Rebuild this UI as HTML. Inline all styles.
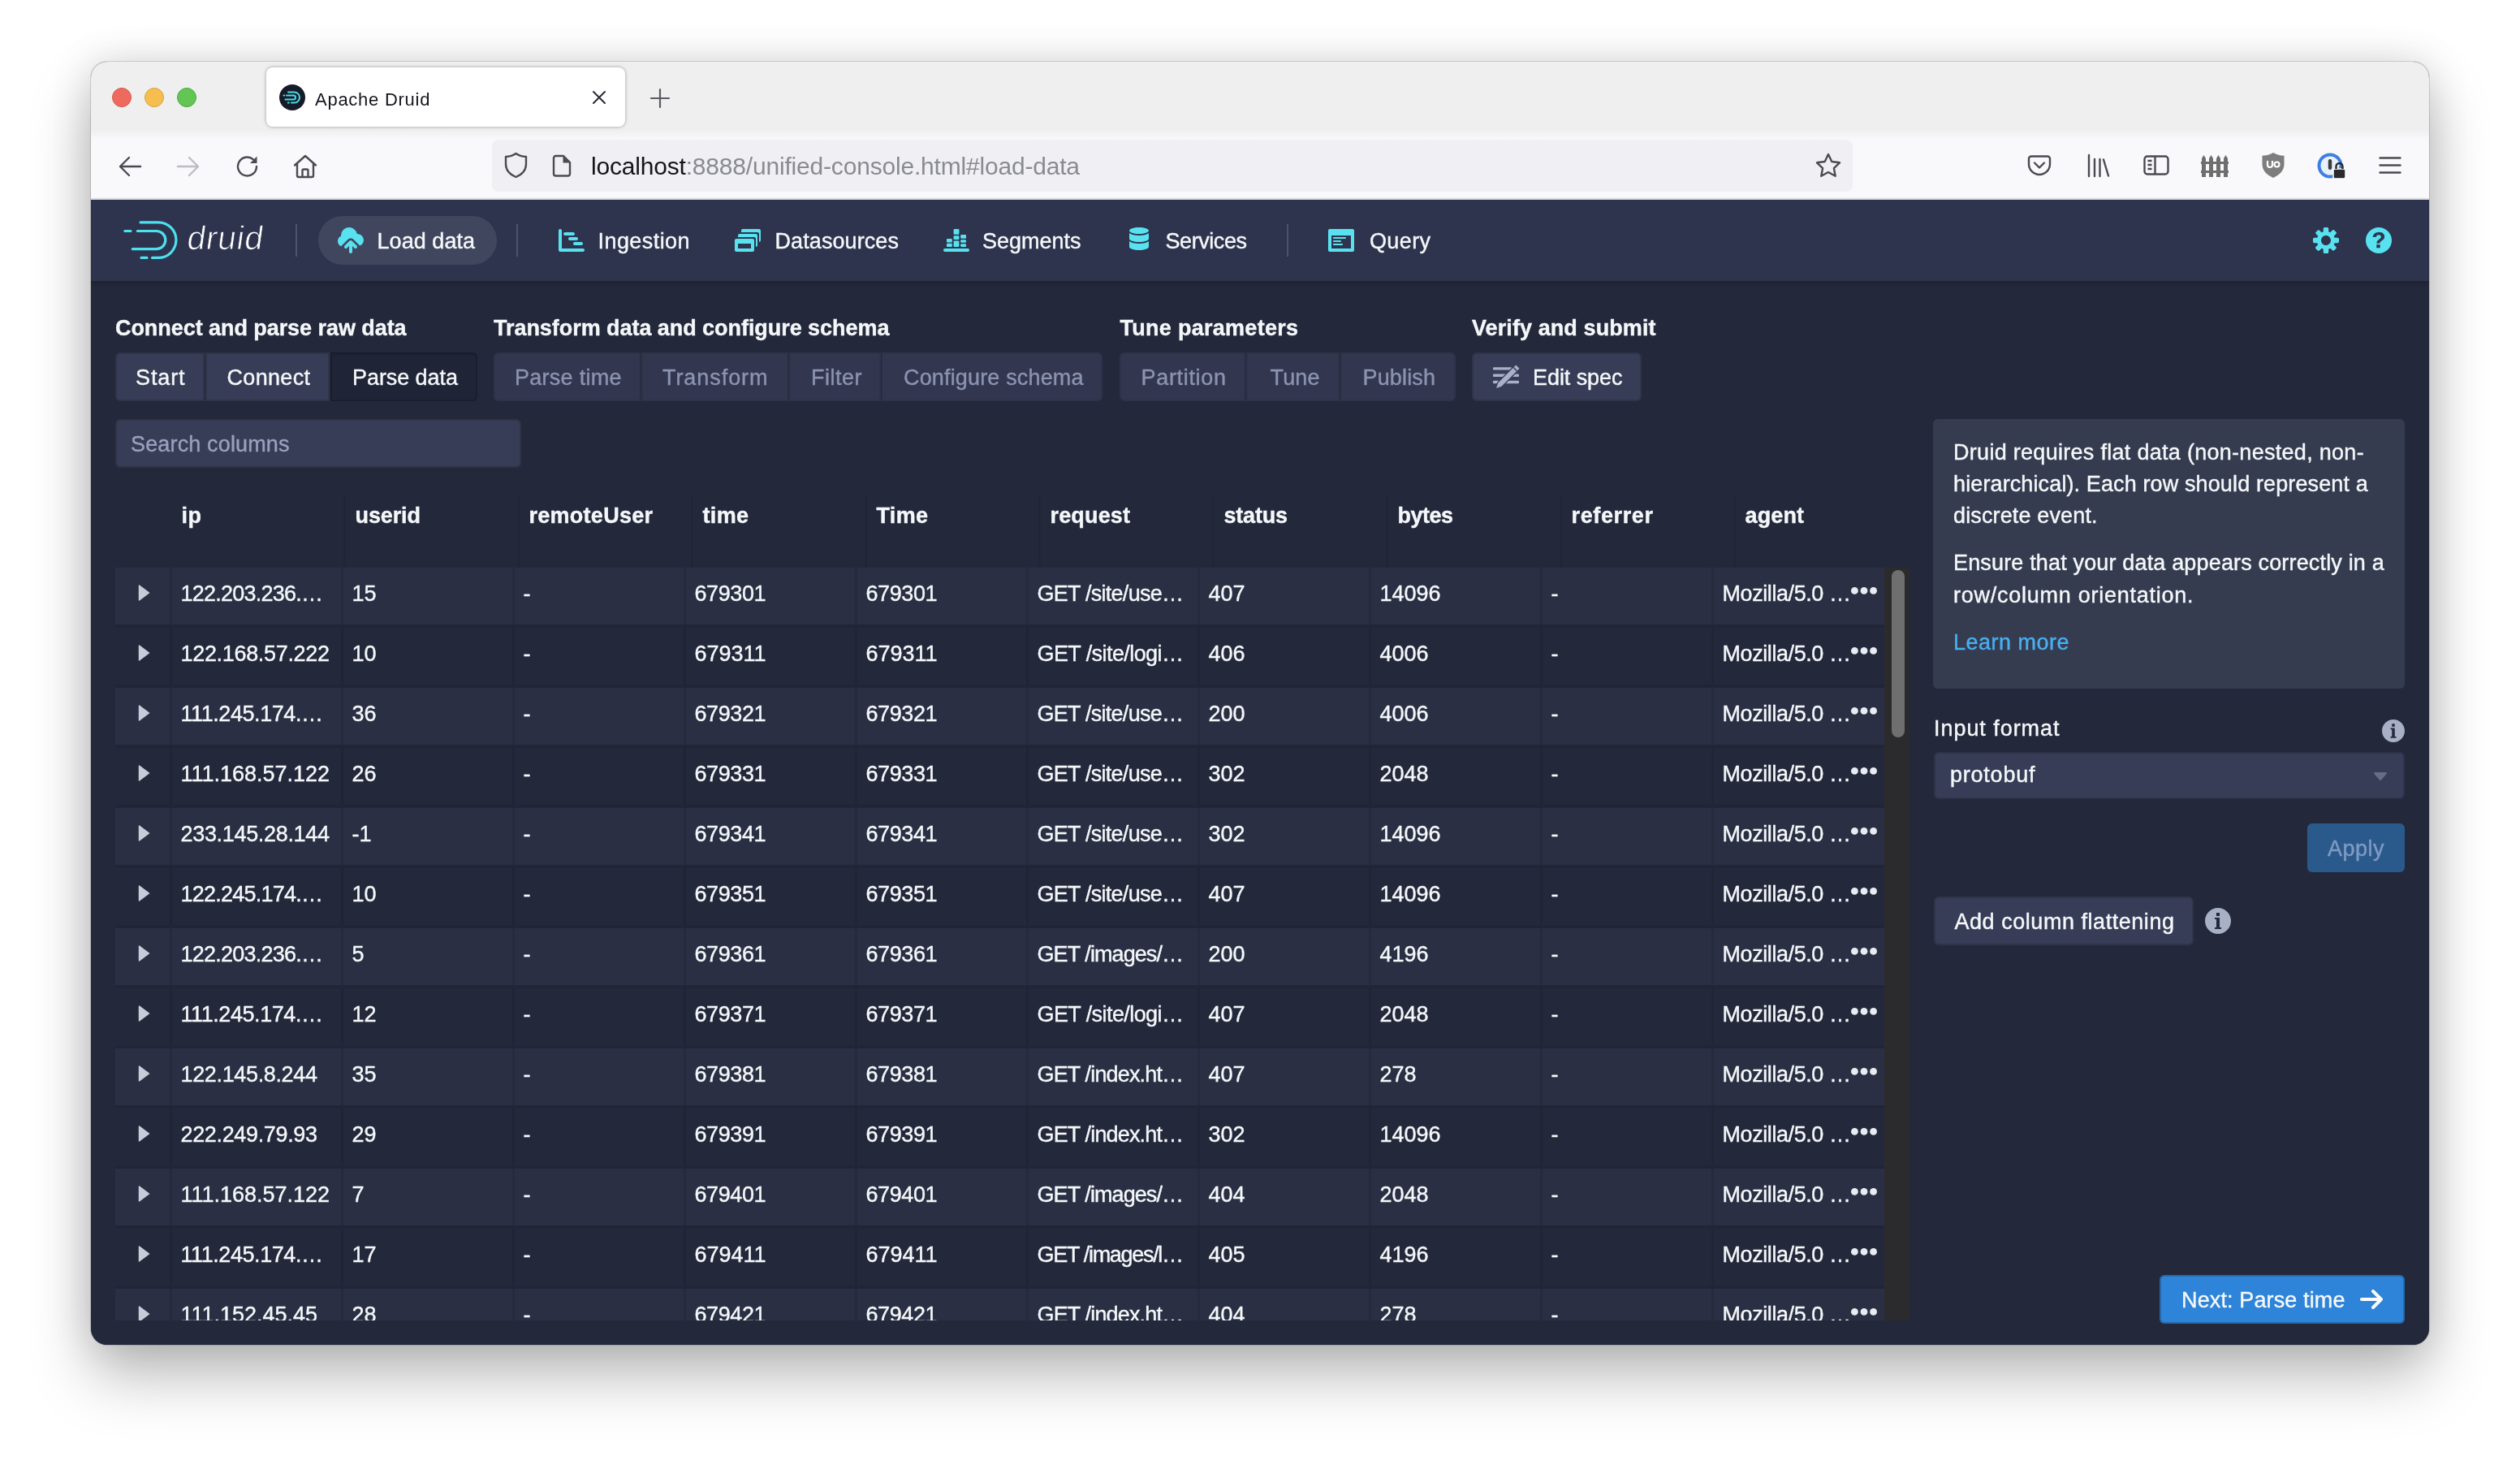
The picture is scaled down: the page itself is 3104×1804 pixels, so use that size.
<!DOCTYPE html>
<html lang="en"><head><meta charset="utf-8"><title>Apache Druid</title>
<style>
html,body{margin:0;padding:0}
body{width:3104px;height:1804px;background:#fff;overflow:hidden;position:relative;font-family:"Liberation Sans",sans-serif}
.win{position:absolute;left:112px;top:76px;width:2880px;height:1580px;border-radius:20px;overflow:hidden;background:#24283b}
.shadow{position:absolute;left:112px;top:76px;width:2880px;height:1580px;border-radius:20px;box-shadow:0 0 0 1px rgba(0,0,0,.13),0 38px 76px rgba(0,0,0,.27),0 0 50px rgba(0,0,0,.13)}
.o{position:absolute;left:-112px;top:-76px;width:3104px;height:1804px;will-change:transform}
.t{position:absolute;white-space:pre;line-height:1;text-decoration:none;margin:0;font-style:normal}
.druid-app .t{-webkit-text-stroke:.4px currentColor}
.tl{position:absolute;width:24px;height:24px;border-radius:50%;box-sizing:border-box}
.row{position:absolute;left:0;width:2180px;height:70px;border-bottom:4px solid #212537}
.row .sep{position:absolute;top:0;width:3px;height:70px;background:rgba(0,0,0,.085)}
svg{display:block;overflow:visible}
</style></head>
<body>
<div class="shadow"></div>
<div class="win"><div class="o">
<section class="browser-chrome">
<div class="tabbar" style="position:absolute;left:112px;top:76px;width:2880px;height:96px;background:linear-gradient(#efeff0 0,#efeff0 84px,#f9f9fb 96px);"></div>
<div class="navbar" style="position:absolute;left:112px;top:172px;width:2880px;height:74px;background:#f9f9fb;border-bottom:2px solid #dfe3ea;box-sizing:border-box"></div>
<div class="tl" style="left:138px;top:108px;background:#ee6a5e;border:1px solid #d5574c"></div>
<div class="tl" style="left:178px;top:108px;background:#f5be4f;border:1px solid #d8a03b"></div>
<div class="tl" style="left:218px;top:108px;background:#62c554;border:1px solid #4fa73f"></div>
<div class="tab" style="position:absolute;left:328px;top:83px;width:442px;height:73px;background:#fff;border-radius:8px;box-shadow:0 0 4px rgba(0,0,0,.35)"></div>
<svg style="position:absolute;left:344px;top:104px" width="32" height="32" viewBox="0 0 32 32" ><circle cx="16" cy="16" r="16" fill="#161b27"/><g fill="none" stroke="#46dcec" stroke-width="2" stroke-linecap="round"><path d="M11 9.500h7.500a6.500 6.500 0 010 13H15"/><path d="M9 13.500h8.500a2.500 2.500 0 010 5H7.500"/></g><g stroke="#46dcec" stroke-width="2" stroke-linecap="round"><path d="M5.500 13.500h.8M10.800 22.500h1"/></g></svg>
<span class="t" style="left:388.0px;top:112.1px;font-size:22px;color:#15141a;letter-spacing:0.74px;">Apache Druid</span>
<svg style="position:absolute;left:730px;top:112px" width="16" height="16" viewBox="0 0 16 16" ><path d="M1 1l14 14M15 1L1 15" stroke="#2b2a33" stroke-width="2" stroke-linecap="round"/></svg>
<svg style="position:absolute;left:801px;top:109px" width="24" height="24" viewBox="0 0 24 24" ><path d="M12 1v22M1 12h22" stroke="#5b5b66" stroke-width="2.200" stroke-linecap="round"/></svg>
<svg style="position:absolute;left:145px;top:191px" width="30" height="28" viewBox="0 0 30 28" ><path d="M28 14H3M14 3L3 14l11 11" fill="none" stroke="#4a4a52" stroke-width="2.400" stroke-linecap="round" stroke-linejoin="round"/></svg>
<svg style="position:absolute;left:217px;top:191px" width="30" height="28" viewBox="0 0 30 28" ><path d="M2 14h25M16 3l11 11-11 11" fill="none" stroke="#bdbdc2" stroke-width="2.400" stroke-linecap="round" stroke-linejoin="round"/></svg>
<svg style="position:absolute;left:289px;top:189px" width="32" height="32" viewBox="0 0 32 32" ><path d="M27 16a11.500 11.500 0 11-4-8.700" fill="none" stroke="#4a4a52" stroke-width="2.400" stroke-linecap="round"/><path d="M27.500 3.500v8.500H19z" fill="#4a4a52"/></svg>
<svg style="position:absolute;left:360px;top:189px" width="32" height="32" viewBox="0 0 32 32" ><path d="M3 14.500L16 3l13 11.500M6 12.500V27a2 2 0 002 2h16a2 2 0 002-2V12.500M12.500 29v-8a1.500 1.500 0 011.500-1.500h4a1.500 1.500 0 011.500 1.500v8" fill="none" stroke="#4a4a52" stroke-width="2.400" stroke-linecap="round" stroke-linejoin="round"/></svg>
<div class="urlbar" style="position:absolute;left:606px;top:172px;width:1676px;height:64px;background:#f0f0f4;border-radius:8px"></div>
<svg style="position:absolute;left:620px;top:187px" width="31" height="33" viewBox="0 0 31 33" ><path d="M15.500 2c4 2.800 8 3.800 12.500 4v9c0 8-5.500 13-12.500 16C8.500 28 3 23 3 15V6c4.500-.2 8.500-1.200 12.500-4z" fill="none" stroke="#4a4a52" stroke-width="2.400" stroke-linejoin="round"/></svg>
<svg style="position:absolute;left:679px;top:190px" width="26" height="28" viewBox="0 0 26 28" ><path d="M5 2h10l8 8v14a2.500 2.500 0 01-2.500 2.500h-15A2.500 2.500 0 013 24V4.500A2.500 2.500 0 015.500 2z" fill="none" stroke="#4a4a52" stroke-width="2.400" stroke-linejoin="round"/><path d="M14.500 2.500l8 8h-8z" fill="#4a4a52"/></svg>
<span class="t" style="left:728px;top:190.4px;font-size:30px;letter-spacing:-0.19px;color:#8a8a93"><span style="color:#15141a">localhost</span>:8888/unified-console.html#load-data</span>
<svg style="position:absolute;left:2235px;top:187px" width="34" height="34" viewBox="0 0 34 34" ><path d="M17 3l4.300 9 9.700 1.300-7.100 6.800 1.800 9.700L17 25l-8.700 4.800 1.800-9.700L3 13.300 12.700 12z" fill="none" stroke="#4a4a52" stroke-width="2.400" stroke-linejoin="round"/></svg>
<svg style="position:absolute;left:2497px;top:190px" width="30" height="28" viewBox="0 0 30 28" ><path d="M5 2.500h20a3 3 0 013 3V12a13 13 0 01-26 0V5.500a3 3 0 013-3z" fill="none" stroke="#4a4a52" stroke-width="2.400"/><path d="M9 10.500l6 6 6-6" fill="none" stroke="#4a4a52" stroke-width="2.400" stroke-linecap="round" stroke-linejoin="round"/></svg>
<svg style="position:absolute;left:2570px;top:189px" width="30" height="30" viewBox="0 0 30 30" ><path d="M3 2v26M10 7v21M16.500 7v21M21 7.500l6 20" fill="none" stroke="#4a4a52" stroke-width="2.400" stroke-linecap="round"/></svg>
<svg style="position:absolute;left:2640px;top:190px" width="32" height="28" viewBox="0 0 32 28" ><rect x="1.500" y="2.500" width="29" height="22" rx="3.500" fill="none" stroke="#4a4a52" stroke-width="2.400"/><path d="M14.500 2.500v22M5.500 8h5M5.500 13h5M5.500 18h5" stroke="#4a4a52" stroke-width="2.400"/></svg>
<svg style="position:absolute;left:2711px;top:189px" width="34" height="30" viewBox="0 0 34 30" ><g fill="#6e6e6e"><path d="M1 6l2.500-4L6 6v23H1zM10 6l2.500-4L15 6v23h-5zM19 6l2.500-4L24 6v23h-5zM28 6l2.500-4L33 6v23h-5z"/><rect x="0" y="10" width="34" height="3"/><rect x="0" y="21" width="34" height="3"/></g></svg>
<svg style="position:absolute;left:2785px;top:187px" width="30" height="33" viewBox="0 0 30 33" ><path d="M15 1c4 2.500 8.500 3.500 13.500 3.800V15c0 8.500-6 13.500-13.500 17C7.500 28.500 1.500 23.500 1.500 15V4.800C6.500 4.500 11 3.500 15 1z" fill="#7d7d7d"/><path d="M8 11v5a3 3 0 006 0v-5" fill="none" stroke="#fff" stroke-width="2.200"/><circle cx="19.500" cy="15.500" r="3" fill="none" stroke="#fff" stroke-width="2.200"/></svg>
<svg style="position:absolute;left:2854px;top:187px" width="36" height="36" viewBox="0 0 36 36" ><circle cx="16" cy="17" r="13.500" fill="#e9f0fb" stroke="#3f7fe0" stroke-width="4"/><rect x="13.800" y="9" width="4.400" height="13" rx="2.200" fill="#3b3b3b"/><rect x="20" y="21" width="15" height="12" rx="2" fill="#2a2a2a" stroke="#fff" stroke-width="1.500"/><path d="M23.500 21v-3a4 4 0 018 0v3" fill="none" stroke="#2a2a2a" stroke-width="2.400"/></svg>
<svg style="position:absolute;left:2930px;top:192px" width="28" height="24" viewBox="0 0 28 24" ><path d="M1.500 2.500h25M1.500 11.500h25M1.500 20.500h25" stroke="#4a4a52" stroke-width="2.400" stroke-linecap="round"/></svg>
</section>
<main class="druid-app">
<div class="app-bg" style="position:absolute;left:112px;top:246px;width:2880px;height:1410px;background:#24283b;"></div>
<header>
<div class="header-bar" style="position:absolute;left:112px;top:246px;width:2880px;height:100px;background:#2f344e;box-shadow:0 2px 6px rgba(0,0,0,.25)"></div>
<svg style="position:absolute;left:150px;top:270px" width="72" height="52" viewBox="0 0 72 52" ><g fill="none" stroke="#4de0ee" stroke-width="3.200" stroke-linecap="round"><path d="M23 3.800H45.100a21.800 21.800 0 010 43.600H37.500"/><path d="M19.300 14.500H42.700a11.100 11.100 0 010 22.200H13.300"/><path d="M3.800 14.500h7.200M24 47.400h7"/></g></svg>
<span class="t" style="left:228.0px;top:272.5px;font-size:41px;color:#fff;letter-spacing:0.58px;-webkit-text-stroke:.900px #2f344e;transform:skewX(-8deg);transform-origin:0 100%;">druid</span>
<div style="position:absolute;left:364px;top:276px;width:2px;height:40px;background:rgba(255,255,255,.15);"></div>
<div style="position:absolute;left:636px;top:276px;width:2px;height:40px;background:rgba(255,255,255,.15);"></div>
<div style="position:absolute;left:1585px;top:276px;width:2px;height:40px;background:rgba(255,255,255,.15);"></div>
<div class="pill" style="position:absolute;left:392px;top:266px;width:220px;height:60px;background:#43486400;border-radius:30px;background:#41465f"></div>
<svg style="position:absolute;left:416px;top:280px" width="32" height="32" viewBox="0 0 16 16" ><path fill="#58e2ef" d="M12 4c-.03 0-.07 0-.1.01A5 5 0 002 5c0 .11.01.22.02.33A3.51 3.51 0 000 8.5c0 1.41.84 2.61 2.03 3.17L6.3 7.4c.45-.45 1.05-.7 1.7-.7s1.25.25 1.7.7l3.9 3.9A3.99 3.99 0 0016 8c0-2.21-1.79-4-4-4z"/><path fill="#58e2ef" d="M8.71 8.29C8.53 8.11 8.28 8 8 8s-.53.11-.71.29l-3 3a1.003 1.003 0 001.42 1.42L7 11.41V15c0 .55.45 1 1 1s1-.45 1-1v-3.590l1.290 1.290c.18.19.43.3.71.3a1.003 1.003 0 00.71-1.710l-3-3z"/></svg>
<a class="t" style="left:464.5px;top:284.3px;font-size:27px;color:#f5f8fa;letter-spacing:0.05px;">Load data</a>
<svg style="position:absolute;left:688px;top:280px" width="32" height="32" viewBox="0 0 16 16" ><path d="M4 5h5c.55 0 1-.45 1-1s-.45-1-1-1H4c-.55 0-1 .45-1 1s.45 1 1 1zm2 2c0 .55.45 1 1 1h4c.55 0 1-.45 1-1s-.45-1-1-1H7c-.55 0-1 .45-1 1zm9 6H2V2c0-.55-.45-1-1-1s-1 .45-1 1v12c0 .55.45 1 1 1h14c.55 0 1-.45 1-1s-.45-1-1-1zm-5-4c-.55 0-1 .45-1 1s.45 1 1 1h4c.55 0 1-.45 1-1s-.45-1-1-1h-4z" fill="#58e2ef" fill-rule="evenodd"/></svg>
<a class="t" style="left:736.5px;top:284.3px;font-size:27px;color:#f5f8fa;letter-spacing:0.43px;">Ingestion</a>
<svg style="position:absolute;left:905px;top:280px" width="32" height="32" viewBox="0 0 16 16" ><path fill="#58e2ef" fill-rule="evenodd" d="M1 7h10c.55 0 1 .45 1 1v6c0 .55-.45 1-1 1H1c-.55 0-1-.45-1-1V8c0-.55.45-1 1-1zm1 3v3h8v-3H2z"/><path fill="#58e2ef" d="M3 4h10c.55 0 1 .45 1 1v6c0 .55-.45 1-1 1V7c0-.55-.45-1-1-1H2V5c0-.55.45-1 1-1z"/><path fill="#58e2ef" d="M5 1h10c.55 0 1 .45 1 1v6c0 .55-.45 1-1 1V4c0-.55-.45-1-1-1H4V2c0-.55.45-1 1-1z"/></svg>
<a class="t" style="left:954.5px;top:284.3px;font-size:27px;color:#f5f8fa;letter-spacing:0.09px;">Datasources</a>
<svg style="position:absolute;left:1162px;top:280px" width="32" height="32" viewBox="0 0 16 16" ><rect x="0" y="13" width="16" height="2" rx="1" fill="#58e2ef"/><rect x="2" y="7" width="3.4" height="2.2" rx=".5" fill="#58e2ef"/><rect x="2" y="9.9" width="3.4" height="2.1" rx=".5" fill="#58e2ef"/><rect x="6.3" y="1" width="3.4" height="3.4" rx=".5" fill="#58e2ef"/><rect x="6.3" y="5.1" width="3.4" height="2.4" rx=".5" fill="#58e2ef"/><rect x="6.3" y="8.2" width="3.4" height="3.8" rx=".5" fill="#58e2ef"/><rect x="10.6" y="4.5" width="3.4" height="2.4" rx=".5" fill="#58e2ef"/><rect x="10.6" y="7.6" width="3.4" height="1.8" rx=".5" fill="#58e2ef"/><rect x="10.6" y="10.1" width="3.4" height="1.9" rx=".5" fill="#58e2ef"/></svg>
<a class="t" style="left:1210.0px;top:284.3px;font-size:27px;color:#f5f8fa;letter-spacing:-0.01px;">Segments</a>
<svg style="position:absolute;left:1387px;top:280px" width="32" height="32" viewBox="0 0 16 16" ><path d="M8 4c3.31 0 6-.9 6-2s-2.69-2-6-2C4.68 0 2 .9 2 2s2.68 2 6 2zm-6-.52V7c0 1.1 2.69 2 6 2s6-.9 6-2V3.48C12.83 4.39 10.59 5 8 5c-2.59 0-4.83-.61-6-1.52zm0 5V12c0 1.1 2.69 2 6 2s6-.9 6-2V8.480C12.83 9.39 10.59 10 8 10c-2.59 0-4.83-.61-6-1.52z" fill="#58e2ef" fill-rule="evenodd"/></svg>
<a class="t" style="left:1435.5px;top:284.3px;font-size:27px;color:#f5f8fa;letter-spacing:-0.43px;">Services</a>
<svg style="position:absolute;left:1636px;top:280px" width="32" height="32" viewBox="0 0 16 16" ><path d="M3.5 7h7c.28 0 .5-.22.5-.5s-.22-.5-.5-.5h-7c-.28 0-.5.22-.5.5s.22.5.5.5zM15 1H1c-.55 0-1 .45-1 1v12c0 .55.45 1 1 1h14c.55 0 1-.45 1-1V2c0-.55-.45-1-1-1zm-1 12H2V5h12v8zM3.500 9h4c.28 0 .5-.22.5-.5S7.78 8 7.5 8h-4c-.28 0-.5.22-.5.5s.22.5.5.5zm0 2h5c.28 0 .5-.22.5-.5s-.22-.5-.5-.5h-5c-.28 0-.5.22-.5.5s.22.5.5.5z" fill="#58e2ef" fill-rule="evenodd"/></svg>
<a class="t" style="left:1687.0px;top:284.3px;font-size:27px;color:#f5f8fa;letter-spacing:0.37px;">Query</a>
<svg style="position:absolute;left:2849px;top:280px" width="32" height="32" viewBox="0 0 16 16" ><path d="M15.19 6.39h-1.85c-.11-.37-.27-.71-.45-1.04l1.36-1.36c.31-.31.31-.82 0-1.13l-1.13-1.130a.803.803 0 00-1.130 0l-1.360 1.360c-.33-.17-.67-.33-1.040-.44V.790c0-.44-.36-.8-.8-.8h-1.600c-.44 0-.8.36-.8.8v1.860c-.39.12-.75.28-1.100.47l-1.300-1.300c-.3-.3-.79-.3-1.090 0L1.820 2.910c-.3.3-.3.79 0 1.090l1.300 1.300c-.2.34-.36.7-.48 1.090H.790c-.44 0-.8.36-.8.8v1.600c0 .44.36.8.8.8h1.850c.11.37.27.71.45 1.040l-1.360 1.360c-.31.31-.31.82 0 1.130l1.130 1.130c.31.31.82.31 1.130 0l1.360-1.360c.33.18.67.33 1.040.44v1.860c0 .44.36.8.8.8h1.600c.44 0 .8-.36.8-.8v-1.860c.39-.12.75-.28 1.100-.47l1.300 1.300c.3.3.79.3 1.090 0l1.090-1.090c.3-.3.3-.79 0-1.090l-1.300-1.300c.19-.35.36-.71.47-1.100h1.860c.44 0 .8-.36.8-.8v-1.600a.816.816 0 00-.810-.790zM8 11c-1.660 0-3-1.340-3-3s1.340-3 3-3 3 1.340 3 3-1.340 3-3 3z" fill="#58e2ef" fill-rule="evenodd"/></svg>
<svg style="position:absolute;left:2914px;top:280px" width="32" height="32" viewBox="0 0 32 32" ><circle cx="16" cy="16" r="16" fill="#58e2ef"/></svg>
<span class="t" style="left:2921.5px;top:281.8px;font-size:28px;font-weight:700;color:#2f344e;">?</span>
</header>
<nav class="steps">
<div class="t" style="left:142.0px;top:391.3px;font-size:27px;font-weight:700;color:#f5f8fa;letter-spacing:-0.06px;">Connect and parse raw data</div>
<div class="btn" style="position:absolute;left:142px;top:434px;width:110px;height:60px;background:#383d57;border-radius:6px 0px 0px 6px;box-shadow:inset 0 0 0 2px rgba(16,22,26,.22);"></div><span class="t" style="left:167.0px;top:452.3px;font-size:27px;color:#f5f8fa;letter-spacing:0.87px;">Start</span>
<div class="btn" style="position:absolute;left:253px;top:434px;width:153px;height:60px;background:#383d57;border-radius:0px 0px 0px 0px;box-shadow:inset 0 0 0 2px rgba(16,22,26,.22);"></div><span class="t" style="left:279.5px;top:452.3px;font-size:27px;color:#f5f8fa;letter-spacing:0.32px;">Connect</span>
<div class="btn" style="position:absolute;left:407px;top:434px;width:181px;height:60px;background:#202437;border-radius:0px 6px 6px 0px;box-shadow:inset 0 0 0 2px rgba(16,22,26,.3), inset 0 2px 3px rgba(16,22,26,.2);"></div><span class="t" style="left:434.0px;top:452.3px;font-size:27px;color:#f5f8fa;letter-spacing:-0.07px;">Parse data</span>
<div class="t" style="left:608.0px;top:391.3px;font-size:27px;font-weight:700;color:#f5f8fa;letter-spacing:-0.05px;">Transform data and configure schema</div>
<div class="btn" style="position:absolute;left:608px;top:434px;width:181px;height:60px;background:#32374f;border-radius:6px 0px 0px 6px;box-shadow:inset 0 0 0 2px rgba(16,22,26,.10);"></div><span class="t" style="left:634.0px;top:452.3px;font-size:27px;color:#8b93b0;letter-spacing:0.27px;">Parse time</span>
<div class="btn" style="position:absolute;left:790px;top:434px;width:181px;height:60px;background:#32374f;border-radius:0px 0px 0px 0px;box-shadow:inset 0 0 0 2px rgba(16,22,26,.10);"></div><span class="t" style="left:816.0px;top:452.3px;font-size:27px;color:#8b93b0;letter-spacing:0.94px;">Transform</span>
<div class="btn" style="position:absolute;left:972px;top:434px;width:113px;height:60px;background:#32374f;border-radius:0px 0px 0px 0px;box-shadow:inset 0 0 0 2px rgba(16,22,26,.10);"></div><span class="t" style="left:999.0px;top:452.3px;font-size:27px;color:#8b93b0;letter-spacing:0.50px;">Filter</span>
<div class="btn" style="position:absolute;left:1086px;top:434px;width:272px;height:60px;background:#32374f;border-radius:0px 6px 6px 0px;box-shadow:inset 0 0 0 2px rgba(16,22,26,.10);"></div><span class="t" style="left:1113.0px;top:452.3px;font-size:27px;color:#8b93b0;letter-spacing:0.16px;">Configure schema</span>
<div class="t" style="left:1379.5px;top:391.3px;font-size:27px;font-weight:700;color:#f5f8fa;letter-spacing:0.28px;">Tune parameters</div>
<div class="btn" style="position:absolute;left:1379px;top:434px;width:155px;height:60px;background:#32374f;border-radius:6px 0px 0px 6px;box-shadow:inset 0 0 0 2px rgba(16,22,26,.10);"></div><span class="t" style="left:1405.5px;top:452.3px;font-size:27px;color:#8b93b0;letter-spacing:0.68px;">Partition</span>
<div class="btn" style="position:absolute;left:1535px;top:434px;width:115px;height:60px;background:#32374f;border-radius:0px 0px 0px 0px;box-shadow:inset 0 0 0 2px rgba(16,22,26,.10);"></div><span class="t" style="left:1564.5px;top:452.3px;font-size:27px;color:#8b93b0;letter-spacing:0.15px;">Tune</span>
<div class="btn" style="position:absolute;left:1651px;top:434px;width:142px;height:60px;background:#32374f;border-radius:0px 6px 6px 0px;box-shadow:inset 0 0 0 2px rgba(16,22,26,.10);"></div><span class="t" style="left:1678.5px;top:452.3px;font-size:27px;color:#8b93b0;letter-spacing:0.16px;">Publish</span>
<div class="t" style="left:1813.0px;top:391.3px;font-size:27px;font-weight:700;color:#f5f8fa;letter-spacing:0.09px;">Verify and submit</div>
<div class="btn" style="position:absolute;left:1813px;top:434px;width:209px;height:60px;background:#383d57;border-radius:6px 6px 6px 6px;box-shadow:inset 0 0 0 2px rgba(16,22,26,.22);"></div><svg style="position:absolute;left:1839px;top:448px" width="32" height="32" viewBox="0 0 16 16" ><g fill="#a9b0c8"><rect x="0" y="2.1" width="11.5" height="1.7" rx=".5"/><rect x="0" y="6.3" width="16" height="1.7" rx=".5"/><rect x="0" y="10.4" width="16" height="1.7" rx=".5"/><path d="M16.260 2.860L14.140.740 3.140 11.740 2 15 5.260 13.860z" stroke="#383d57" stroke-width="1.300" stroke-linejoin="round" paint-order="stroke"/><path d="M12.600 2.300l2.100 2.100" stroke="#383d57" stroke-width=".7" fill="none"/></g></svg><span class="t" style="left:1888.0px;top:452.3px;font-size:27px;color:#f5f8fa;letter-spacing:-0.07px;">Edit spec</span>
<div class="input" style="position:absolute;left:142px;top:516px;width:500px;height:60px;background:#383d57;border-radius:6px;box-shadow:inset 0 0 0 2px rgba(16,22,26,.25)"></div>
<span class="t" style="left:161.0px;top:534.3px;font-size:27px;color:#98a0bd;letter-spacing:0.15px;">Search columns</span>
</nav>
<section class="table">
<div class="t" style="left:223.5px;top:621.8px;font-size:27px;font-weight:700;color:#f5f8fa;letter-spacing:0.50px;">ip</div>
<div style="position:absolute;left:423px;top:610px;width:3px;height:89px;background:rgba(0,0,0,.07);"></div>
<div class="t" style="left:437.5px;top:621.8px;font-size:27px;font-weight:700;color:#f5f8fa;letter-spacing:-0.11px;">userid</div>
<div style="position:absolute;left:637px;top:610px;width:3px;height:89px;background:rgba(0,0,0,.07);"></div>
<div class="t" style="left:651.5px;top:621.8px;font-size:27px;font-weight:700;color:#f5f8fa;letter-spacing:0.27px;">remoteUser</div>
<div style="position:absolute;left:851px;top:610px;width:3px;height:89px;background:rgba(0,0,0,.07);"></div>
<div class="t" style="left:865.5px;top:621.8px;font-size:27px;font-weight:700;color:#f5f8fa;letter-spacing:0.32px;">time</div>
<div style="position:absolute;left:1065px;top:610px;width:3px;height:89px;background:rgba(0,0,0,.07);"></div>
<div class="t" style="left:1079.5px;top:621.8px;font-size:27px;font-weight:700;color:#f5f8fa;letter-spacing:0.32px;">Time</div>
<div style="position:absolute;left:1279px;top:610px;width:3px;height:89px;background:rgba(0,0,0,.07);"></div>
<div class="t" style="left:1293.5px;top:621.8px;font-size:27px;font-weight:700;color:#f5f8fa;letter-spacing:0.16px;">request</div>
<div style="position:absolute;left:1493px;top:610px;width:3px;height:89px;background:rgba(0,0,0,.07);"></div>
<div class="t" style="left:1507.5px;top:621.8px;font-size:27px;font-weight:700;color:#f5f8fa;letter-spacing:-0.21px;">status</div>
<div style="position:absolute;left:1707px;top:610px;width:3px;height:89px;background:rgba(0,0,0,.07);"></div>
<div class="t" style="left:1721.5px;top:621.8px;font-size:27px;font-weight:700;color:#f5f8fa;letter-spacing:-0.51px;">bytes</div>
<div style="position:absolute;left:1921px;top:610px;width:3px;height:89px;background:rgba(0,0,0,.07);"></div>
<div class="t" style="left:1935.5px;top:621.8px;font-size:27px;font-weight:700;color:#f5f8fa;letter-spacing:0.63px;">referrer</div>
<div style="position:absolute;left:2135px;top:610px;width:3px;height:89px;background:rgba(0,0,0,.07);"></div>
<div class="t" style="left:2149.5px;top:621.8px;font-size:27px;font-weight:700;color:#f5f8fa;letter-spacing:0.12px;">agent</div>
<div class="tbody" style="position:absolute;left:142px;top:699px;width:2180px;height:927px;overflow:hidden"><div class="row" style="top:0px;background:#2a2f43"><svg style="position:absolute;left:28px;top:20px" width="15" height="22" viewBox="0 0 15 22" ><path d="M1.500 2L13.500 11 1.500 20z" fill="#c6cdd9" stroke="#c6cdd9" stroke-width="1.500" stroke-linejoin="round"/></svg><i class="sep" style="left:67px"></i><span class="t" style="left:80.5px;top:19.3px;font-size:27px;color:#f5f8fa;letter-spacing:-0.76px;">122.203.236.…</span><i class="sep" style="left:278px"></i><span class="t" style="left:291.5px;top:19.3px;font-size:27px;color:#f5f8fa;">15</span><i class="sep" style="left:489px"></i><span class="t" style="left:502.5px;top:19.3px;font-size:27px;color:#f5f8fa;">-</span><i class="sep" style="left:700px"></i><span class="t" style="left:713.5px;top:19.3px;font-size:27px;color:#f5f8fa;letter-spacing:-0.42px;">679301</span><i class="sep" style="left:911px"></i><span class="t" style="left:924.5px;top:19.3px;font-size:27px;color:#f5f8fa;letter-spacing:-0.42px;">679301</span><i class="sep" style="left:1122px"></i><span class="t" style="left:1135.5px;top:19.3px;font-size:27px;color:#f5f8fa;letter-spacing:-0.74px;">GET /site/use…</span><i class="sep" style="left:1333px"></i><span class="t" style="left:1346.5px;top:19.3px;font-size:27px;color:#f5f8fa;">407</span><i class="sep" style="left:1544px"></i><span class="t" style="left:1557.5px;top:19.3px;font-size:27px;color:#f5f8fa;">14096</span><i class="sep" style="left:1755px"></i><span class="t" style="left:1768.5px;top:19.3px;font-size:27px;color:#f5f8fa;">-</span><i class="sep" style="left:1966px"></i><span class="t" style="left:1979.5px;top:19.3px;font-size:27px;color:#f5f8fa;letter-spacing:-0.42px;">Mozilla/5.0 …</span><svg style="position:absolute;left:2138px;top:23.5px" width="32" height="8.8" viewBox="0 0 16 4.4" ><circle cx="2.2" cy="2.2" r="2.2" fill="#e8edf3"/><circle cx="8" cy="2.2" r="2.2" fill="#e8edf3"/><circle cx="13.8" cy="2.2" r="2.2" fill="#e8edf3"/></svg></div><div class="row" style="top:74px;background:#24283b"><svg style="position:absolute;left:28px;top:20px" width="15" height="22" viewBox="0 0 15 22" ><path d="M1.500 2L13.500 11 1.500 20z" fill="#c6cdd9" stroke="#c6cdd9" stroke-width="1.500" stroke-linejoin="round"/></svg><i class="sep" style="left:67px"></i><span class="t" style="left:80.5px;top:19.3px;font-size:27px;color:#f5f8fa;letter-spacing:-0.32px;">122.168.57.222</span><i class="sep" style="left:278px"></i><span class="t" style="left:291.5px;top:19.3px;font-size:27px;color:#f5f8fa;">10</span><i class="sep" style="left:489px"></i><span class="t" style="left:502.5px;top:19.3px;font-size:27px;color:#f5f8fa;">-</span><i class="sep" style="left:700px"></i><span class="t" style="left:713.5px;top:19.3px;font-size:27px;color:#f5f8fa;letter-spacing:-0.02px;">679311</span><i class="sep" style="left:911px"></i><span class="t" style="left:924.5px;top:19.3px;font-size:27px;color:#f5f8fa;letter-spacing:-0.02px;">679311</span><i class="sep" style="left:1122px"></i><span class="t" style="left:1135.5px;top:19.3px;font-size:27px;color:#f5f8fa;letter-spacing:-0.58px;">GET /site/logi…</span><i class="sep" style="left:1333px"></i><span class="t" style="left:1346.5px;top:19.3px;font-size:27px;color:#f5f8fa;">406</span><i class="sep" style="left:1544px"></i><span class="t" style="left:1557.5px;top:19.3px;font-size:27px;color:#f5f8fa;">4006</span><i class="sep" style="left:1755px"></i><span class="t" style="left:1768.5px;top:19.3px;font-size:27px;color:#f5f8fa;">-</span><i class="sep" style="left:1966px"></i><span class="t" style="left:1979.5px;top:19.3px;font-size:27px;color:#f5f8fa;letter-spacing:-0.42px;">Mozilla/5.0 …</span><svg style="position:absolute;left:2138px;top:23.5px" width="32" height="8.8" viewBox="0 0 16 4.4" ><circle cx="2.2" cy="2.2" r="2.2" fill="#e8edf3"/><circle cx="8" cy="2.2" r="2.2" fill="#e8edf3"/><circle cx="13.8" cy="2.2" r="2.2" fill="#e8edf3"/></svg></div><div class="row" style="top:148px;background:#2a2f43"><svg style="position:absolute;left:28px;top:20px" width="15" height="22" viewBox="0 0 15 22" ><path d="M1.500 2L13.500 11 1.500 20z" fill="#c6cdd9" stroke="#c6cdd9" stroke-width="1.500" stroke-linejoin="round"/></svg><i class="sep" style="left:67px"></i><span class="t" style="left:80.5px;top:19.3px;font-size:27px;color:#f5f8fa;letter-spacing:-0.43px;">111.245.174.…</span><i class="sep" style="left:278px"></i><span class="t" style="left:291.5px;top:19.3px;font-size:27px;color:#f5f8fa;">36</span><i class="sep" style="left:489px"></i><span class="t" style="left:502.5px;top:19.3px;font-size:27px;color:#f5f8fa;">-</span><i class="sep" style="left:700px"></i><span class="t" style="left:713.5px;top:19.3px;font-size:27px;color:#f5f8fa;letter-spacing:-0.42px;">679321</span><i class="sep" style="left:911px"></i><span class="t" style="left:924.5px;top:19.3px;font-size:27px;color:#f5f8fa;letter-spacing:-0.42px;">679321</span><i class="sep" style="left:1122px"></i><span class="t" style="left:1135.5px;top:19.3px;font-size:27px;color:#f5f8fa;letter-spacing:-0.74px;">GET /site/use…</span><i class="sep" style="left:1333px"></i><span class="t" style="left:1346.5px;top:19.3px;font-size:27px;color:#f5f8fa;">200</span><i class="sep" style="left:1544px"></i><span class="t" style="left:1557.5px;top:19.3px;font-size:27px;color:#f5f8fa;">4006</span><i class="sep" style="left:1755px"></i><span class="t" style="left:1768.5px;top:19.3px;font-size:27px;color:#f5f8fa;">-</span><i class="sep" style="left:1966px"></i><span class="t" style="left:1979.5px;top:19.3px;font-size:27px;color:#f5f8fa;letter-spacing:-0.42px;">Mozilla/5.0 …</span><svg style="position:absolute;left:2138px;top:23.5px" width="32" height="8.8" viewBox="0 0 16 4.4" ><circle cx="2.2" cy="2.2" r="2.2" fill="#e8edf3"/><circle cx="8" cy="2.2" r="2.2" fill="#e8edf3"/><circle cx="13.8" cy="2.2" r="2.2" fill="#e8edf3"/></svg></div><div class="row" style="top:222px;background:#24283b"><svg style="position:absolute;left:28px;top:20px" width="15" height="22" viewBox="0 0 15 22" ><path d="M1.500 2L13.500 11 1.500 20z" fill="#c6cdd9" stroke="#c6cdd9" stroke-width="1.500" stroke-linejoin="round"/></svg><i class="sep" style="left:67px"></i><span class="t" style="left:80.5px;top:19.3px;font-size:27px;color:#f5f8fa;letter-spacing:-0.01px;">111.168.57.122</span><i class="sep" style="left:278px"></i><span class="t" style="left:291.5px;top:19.3px;font-size:27px;color:#f5f8fa;">26</span><i class="sep" style="left:489px"></i><span class="t" style="left:502.5px;top:19.3px;font-size:27px;color:#f5f8fa;">-</span><i class="sep" style="left:700px"></i><span class="t" style="left:713.5px;top:19.3px;font-size:27px;color:#f5f8fa;letter-spacing:-0.42px;">679331</span><i class="sep" style="left:911px"></i><span class="t" style="left:924.5px;top:19.3px;font-size:27px;color:#f5f8fa;letter-spacing:-0.42px;">679331</span><i class="sep" style="left:1122px"></i><span class="t" style="left:1135.5px;top:19.3px;font-size:27px;color:#f5f8fa;letter-spacing:-0.74px;">GET /site/use…</span><i class="sep" style="left:1333px"></i><span class="t" style="left:1346.5px;top:19.3px;font-size:27px;color:#f5f8fa;">302</span><i class="sep" style="left:1544px"></i><span class="t" style="left:1557.5px;top:19.3px;font-size:27px;color:#f5f8fa;">2048</span><i class="sep" style="left:1755px"></i><span class="t" style="left:1768.5px;top:19.3px;font-size:27px;color:#f5f8fa;">-</span><i class="sep" style="left:1966px"></i><span class="t" style="left:1979.5px;top:19.3px;font-size:27px;color:#f5f8fa;letter-spacing:-0.42px;">Mozilla/5.0 …</span><svg style="position:absolute;left:2138px;top:23.5px" width="32" height="8.8" viewBox="0 0 16 4.4" ><circle cx="2.2" cy="2.2" r="2.2" fill="#e8edf3"/><circle cx="8" cy="2.2" r="2.2" fill="#e8edf3"/><circle cx="13.8" cy="2.2" r="2.2" fill="#e8edf3"/></svg></div><div class="row" style="top:296px;background:#2a2f43"><svg style="position:absolute;left:28px;top:20px" width="15" height="22" viewBox="0 0 15 22" ><path d="M1.500 2L13.500 11 1.500 20z" fill="#c6cdd9" stroke="#c6cdd9" stroke-width="1.500" stroke-linejoin="round"/></svg><i class="sep" style="left:67px"></i><span class="t" style="left:80.5px;top:19.3px;font-size:27px;color:#f5f8fa;letter-spacing:-0.32px;">233.145.28.144</span><i class="sep" style="left:278px"></i><span class="t" style="left:291.5px;top:19.3px;font-size:27px;color:#f5f8fa;">-1</span><i class="sep" style="left:489px"></i><span class="t" style="left:502.5px;top:19.3px;font-size:27px;color:#f5f8fa;">-</span><i class="sep" style="left:700px"></i><span class="t" style="left:713.5px;top:19.3px;font-size:27px;color:#f5f8fa;letter-spacing:-0.42px;">679341</span><i class="sep" style="left:911px"></i><span class="t" style="left:924.5px;top:19.3px;font-size:27px;color:#f5f8fa;letter-spacing:-0.42px;">679341</span><i class="sep" style="left:1122px"></i><span class="t" style="left:1135.5px;top:19.3px;font-size:27px;color:#f5f8fa;letter-spacing:-0.74px;">GET /site/use…</span><i class="sep" style="left:1333px"></i><span class="t" style="left:1346.5px;top:19.3px;font-size:27px;color:#f5f8fa;">302</span><i class="sep" style="left:1544px"></i><span class="t" style="left:1557.5px;top:19.3px;font-size:27px;color:#f5f8fa;">14096</span><i class="sep" style="left:1755px"></i><span class="t" style="left:1768.5px;top:19.3px;font-size:27px;color:#f5f8fa;">-</span><i class="sep" style="left:1966px"></i><span class="t" style="left:1979.5px;top:19.3px;font-size:27px;color:#f5f8fa;letter-spacing:-0.42px;">Mozilla/5.0 …</span><svg style="position:absolute;left:2138px;top:23.5px" width="32" height="8.8" viewBox="0 0 16 4.4" ><circle cx="2.2" cy="2.2" r="2.2" fill="#e8edf3"/><circle cx="8" cy="2.2" r="2.2" fill="#e8edf3"/><circle cx="13.8" cy="2.2" r="2.2" fill="#e8edf3"/></svg></div><div class="row" style="top:370px;background:#24283b"><svg style="position:absolute;left:28px;top:20px" width="15" height="22" viewBox="0 0 15 22" ><path d="M1.500 2L13.500 11 1.500 20z" fill="#c6cdd9" stroke="#c6cdd9" stroke-width="1.500" stroke-linejoin="round"/></svg><i class="sep" style="left:67px"></i><span class="t" style="left:80.5px;top:19.3px;font-size:27px;color:#f5f8fa;letter-spacing:-0.76px;">122.245.174.…</span><i class="sep" style="left:278px"></i><span class="t" style="left:291.5px;top:19.3px;font-size:27px;color:#f5f8fa;">10</span><i class="sep" style="left:489px"></i><span class="t" style="left:502.5px;top:19.3px;font-size:27px;color:#f5f8fa;">-</span><i class="sep" style="left:700px"></i><span class="t" style="left:713.5px;top:19.3px;font-size:27px;color:#f5f8fa;letter-spacing:-0.42px;">679351</span><i class="sep" style="left:911px"></i><span class="t" style="left:924.5px;top:19.3px;font-size:27px;color:#f5f8fa;letter-spacing:-0.42px;">679351</span><i class="sep" style="left:1122px"></i><span class="t" style="left:1135.5px;top:19.3px;font-size:27px;color:#f5f8fa;letter-spacing:-0.74px;">GET /site/use…</span><i class="sep" style="left:1333px"></i><span class="t" style="left:1346.5px;top:19.3px;font-size:27px;color:#f5f8fa;">407</span><i class="sep" style="left:1544px"></i><span class="t" style="left:1557.5px;top:19.3px;font-size:27px;color:#f5f8fa;">14096</span><i class="sep" style="left:1755px"></i><span class="t" style="left:1768.5px;top:19.3px;font-size:27px;color:#f5f8fa;">-</span><i class="sep" style="left:1966px"></i><span class="t" style="left:1979.5px;top:19.3px;font-size:27px;color:#f5f8fa;letter-spacing:-0.42px;">Mozilla/5.0 …</span><svg style="position:absolute;left:2138px;top:23.5px" width="32" height="8.8" viewBox="0 0 16 4.4" ><circle cx="2.2" cy="2.2" r="2.2" fill="#e8edf3"/><circle cx="8" cy="2.2" r="2.2" fill="#e8edf3"/><circle cx="13.8" cy="2.2" r="2.2" fill="#e8edf3"/></svg></div><div class="row" style="top:444px;background:#2a2f43"><svg style="position:absolute;left:28px;top:20px" width="15" height="22" viewBox="0 0 15 22" ><path d="M1.500 2L13.500 11 1.500 20z" fill="#c6cdd9" stroke="#c6cdd9" stroke-width="1.500" stroke-linejoin="round"/></svg><i class="sep" style="left:67px"></i><span class="t" style="left:80.5px;top:19.3px;font-size:27px;color:#f5f8fa;letter-spacing:-0.76px;">122.203.236.…</span><i class="sep" style="left:278px"></i><span class="t" style="left:291.5px;top:19.3px;font-size:27px;color:#f5f8fa;">5</span><i class="sep" style="left:489px"></i><span class="t" style="left:502.5px;top:19.3px;font-size:27px;color:#f5f8fa;">-</span><i class="sep" style="left:700px"></i><span class="t" style="left:713.5px;top:19.3px;font-size:27px;color:#f5f8fa;letter-spacing:-0.42px;">679361</span><i class="sep" style="left:911px"></i><span class="t" style="left:924.5px;top:19.3px;font-size:27px;color:#f5f8fa;letter-spacing:-0.42px;">679361</span><i class="sep" style="left:1122px"></i><span class="t" style="left:1135.5px;top:19.3px;font-size:27px;color:#f5f8fa;letter-spacing:-0.92px;">GET /images/…</span><i class="sep" style="left:1333px"></i><span class="t" style="left:1346.5px;top:19.3px;font-size:27px;color:#f5f8fa;">200</span><i class="sep" style="left:1544px"></i><span class="t" style="left:1557.5px;top:19.3px;font-size:27px;color:#f5f8fa;">4196</span><i class="sep" style="left:1755px"></i><span class="t" style="left:1768.5px;top:19.3px;font-size:27px;color:#f5f8fa;">-</span><i class="sep" style="left:1966px"></i><span class="t" style="left:1979.5px;top:19.3px;font-size:27px;color:#f5f8fa;letter-spacing:-0.42px;">Mozilla/5.0 …</span><svg style="position:absolute;left:2138px;top:23.5px" width="32" height="8.8" viewBox="0 0 16 4.4" ><circle cx="2.2" cy="2.2" r="2.2" fill="#e8edf3"/><circle cx="8" cy="2.2" r="2.2" fill="#e8edf3"/><circle cx="13.8" cy="2.2" r="2.2" fill="#e8edf3"/></svg></div><div class="row" style="top:518px;background:#24283b"><svg style="position:absolute;left:28px;top:20px" width="15" height="22" viewBox="0 0 15 22" ><path d="M1.500 2L13.500 11 1.500 20z" fill="#c6cdd9" stroke="#c6cdd9" stroke-width="1.500" stroke-linejoin="round"/></svg><i class="sep" style="left:67px"></i><span class="t" style="left:80.5px;top:19.3px;font-size:27px;color:#f5f8fa;letter-spacing:-0.43px;">111.245.174.…</span><i class="sep" style="left:278px"></i><span class="t" style="left:291.5px;top:19.3px;font-size:27px;color:#f5f8fa;">12</span><i class="sep" style="left:489px"></i><span class="t" style="left:502.5px;top:19.3px;font-size:27px;color:#f5f8fa;">-</span><i class="sep" style="left:700px"></i><span class="t" style="left:713.5px;top:19.3px;font-size:27px;color:#f5f8fa;letter-spacing:-0.42px;">679371</span><i class="sep" style="left:911px"></i><span class="t" style="left:924.5px;top:19.3px;font-size:27px;color:#f5f8fa;letter-spacing:-0.42px;">679371</span><i class="sep" style="left:1122px"></i><span class="t" style="left:1135.5px;top:19.3px;font-size:27px;color:#f5f8fa;letter-spacing:-0.58px;">GET /site/logi…</span><i class="sep" style="left:1333px"></i><span class="t" style="left:1346.5px;top:19.3px;font-size:27px;color:#f5f8fa;">407</span><i class="sep" style="left:1544px"></i><span class="t" style="left:1557.5px;top:19.3px;font-size:27px;color:#f5f8fa;">2048</span><i class="sep" style="left:1755px"></i><span class="t" style="left:1768.5px;top:19.3px;font-size:27px;color:#f5f8fa;">-</span><i class="sep" style="left:1966px"></i><span class="t" style="left:1979.5px;top:19.3px;font-size:27px;color:#f5f8fa;letter-spacing:-0.42px;">Mozilla/5.0 …</span><svg style="position:absolute;left:2138px;top:23.5px" width="32" height="8.8" viewBox="0 0 16 4.4" ><circle cx="2.2" cy="2.2" r="2.2" fill="#e8edf3"/><circle cx="8" cy="2.2" r="2.2" fill="#e8edf3"/><circle cx="13.8" cy="2.2" r="2.2" fill="#e8edf3"/></svg></div><div class="row" style="top:592px;background:#2a2f43"><svg style="position:absolute;left:28px;top:20px" width="15" height="22" viewBox="0 0 15 22" ><path d="M1.500 2L13.500 11 1.500 20z" fill="#c6cdd9" stroke="#c6cdd9" stroke-width="1.500" stroke-linejoin="round"/></svg><i class="sep" style="left:67px"></i><span class="t" style="left:80.5px;top:19.3px;font-size:27px;color:#f5f8fa;letter-spacing:-0.35px;">122.145.8.244</span><i class="sep" style="left:278px"></i><span class="t" style="left:291.5px;top:19.3px;font-size:27px;color:#f5f8fa;">35</span><i class="sep" style="left:489px"></i><span class="t" style="left:502.5px;top:19.3px;font-size:27px;color:#f5f8fa;">-</span><i class="sep" style="left:700px"></i><span class="t" style="left:713.5px;top:19.3px;font-size:27px;color:#f5f8fa;letter-spacing:-0.42px;">679381</span><i class="sep" style="left:911px"></i><span class="t" style="left:924.5px;top:19.3px;font-size:27px;color:#f5f8fa;letter-spacing:-0.42px;">679381</span><i class="sep" style="left:1122px"></i><span class="t" style="left:1135.5px;top:19.3px;font-size:27px;color:#f5f8fa;letter-spacing:-0.85px;">GET /index.ht…</span><i class="sep" style="left:1333px"></i><span class="t" style="left:1346.5px;top:19.3px;font-size:27px;color:#f5f8fa;">407</span><i class="sep" style="left:1544px"></i><span class="t" style="left:1557.5px;top:19.3px;font-size:27px;color:#f5f8fa;">278</span><i class="sep" style="left:1755px"></i><span class="t" style="left:1768.5px;top:19.3px;font-size:27px;color:#f5f8fa;">-</span><i class="sep" style="left:1966px"></i><span class="t" style="left:1979.5px;top:19.3px;font-size:27px;color:#f5f8fa;letter-spacing:-0.42px;">Mozilla/5.0 …</span><svg style="position:absolute;left:2138px;top:23.5px" width="32" height="8.8" viewBox="0 0 16 4.4" ><circle cx="2.2" cy="2.2" r="2.2" fill="#e8edf3"/><circle cx="8" cy="2.2" r="2.2" fill="#e8edf3"/><circle cx="13.8" cy="2.2" r="2.2" fill="#e8edf3"/></svg></div><div class="row" style="top:666px;background:#24283b"><svg style="position:absolute;left:28px;top:20px" width="15" height="22" viewBox="0 0 15 22" ><path d="M1.500 2L13.500 11 1.500 20z" fill="#c6cdd9" stroke="#c6cdd9" stroke-width="1.500" stroke-linejoin="round"/></svg><i class="sep" style="left:67px"></i><span class="t" style="left:80.5px;top:19.3px;font-size:27px;color:#f5f8fa;letter-spacing:-0.35px;">222.249.79.93</span><i class="sep" style="left:278px"></i><span class="t" style="left:291.5px;top:19.3px;font-size:27px;color:#f5f8fa;">29</span><i class="sep" style="left:489px"></i><span class="t" style="left:502.5px;top:19.3px;font-size:27px;color:#f5f8fa;">-</span><i class="sep" style="left:700px"></i><span class="t" style="left:713.5px;top:19.3px;font-size:27px;color:#f5f8fa;letter-spacing:-0.42px;">679391</span><i class="sep" style="left:911px"></i><span class="t" style="left:924.5px;top:19.3px;font-size:27px;color:#f5f8fa;letter-spacing:-0.42px;">679391</span><i class="sep" style="left:1122px"></i><span class="t" style="left:1135.5px;top:19.3px;font-size:27px;color:#f5f8fa;letter-spacing:-0.85px;">GET /index.ht…</span><i class="sep" style="left:1333px"></i><span class="t" style="left:1346.5px;top:19.3px;font-size:27px;color:#f5f8fa;">302</span><i class="sep" style="left:1544px"></i><span class="t" style="left:1557.5px;top:19.3px;font-size:27px;color:#f5f8fa;">14096</span><i class="sep" style="left:1755px"></i><span class="t" style="left:1768.5px;top:19.3px;font-size:27px;color:#f5f8fa;">-</span><i class="sep" style="left:1966px"></i><span class="t" style="left:1979.5px;top:19.3px;font-size:27px;color:#f5f8fa;letter-spacing:-0.42px;">Mozilla/5.0 …</span><svg style="position:absolute;left:2138px;top:23.5px" width="32" height="8.8" viewBox="0 0 16 4.4" ><circle cx="2.2" cy="2.2" r="2.2" fill="#e8edf3"/><circle cx="8" cy="2.2" r="2.2" fill="#e8edf3"/><circle cx="13.8" cy="2.2" r="2.2" fill="#e8edf3"/></svg></div><div class="row" style="top:740px;background:#2a2f43"><svg style="position:absolute;left:28px;top:20px" width="15" height="22" viewBox="0 0 15 22" ><path d="M1.500 2L13.500 11 1.500 20z" fill="#c6cdd9" stroke="#c6cdd9" stroke-width="1.500" stroke-linejoin="round"/></svg><i class="sep" style="left:67px"></i><span class="t" style="left:80.5px;top:19.3px;font-size:27px;color:#f5f8fa;letter-spacing:-0.01px;">111.168.57.122</span><i class="sep" style="left:278px"></i><span class="t" style="left:291.5px;top:19.3px;font-size:27px;color:#f5f8fa;">7</span><i class="sep" style="left:489px"></i><span class="t" style="left:502.5px;top:19.3px;font-size:27px;color:#f5f8fa;">-</span><i class="sep" style="left:700px"></i><span class="t" style="left:713.5px;top:19.3px;font-size:27px;color:#f5f8fa;letter-spacing:-0.42px;">679401</span><i class="sep" style="left:911px"></i><span class="t" style="left:924.5px;top:19.3px;font-size:27px;color:#f5f8fa;letter-spacing:-0.42px;">679401</span><i class="sep" style="left:1122px"></i><span class="t" style="left:1135.5px;top:19.3px;font-size:27px;color:#f5f8fa;letter-spacing:-0.92px;">GET /images/…</span><i class="sep" style="left:1333px"></i><span class="t" style="left:1346.5px;top:19.3px;font-size:27px;color:#f5f8fa;">404</span><i class="sep" style="left:1544px"></i><span class="t" style="left:1557.5px;top:19.3px;font-size:27px;color:#f5f8fa;">2048</span><i class="sep" style="left:1755px"></i><span class="t" style="left:1768.5px;top:19.3px;font-size:27px;color:#f5f8fa;">-</span><i class="sep" style="left:1966px"></i><span class="t" style="left:1979.5px;top:19.3px;font-size:27px;color:#f5f8fa;letter-spacing:-0.42px;">Mozilla/5.0 …</span><svg style="position:absolute;left:2138px;top:23.5px" width="32" height="8.8" viewBox="0 0 16 4.4" ><circle cx="2.2" cy="2.2" r="2.2" fill="#e8edf3"/><circle cx="8" cy="2.2" r="2.2" fill="#e8edf3"/><circle cx="13.8" cy="2.2" r="2.2" fill="#e8edf3"/></svg></div><div class="row" style="top:814px;background:#24283b"><svg style="position:absolute;left:28px;top:20px" width="15" height="22" viewBox="0 0 15 22" ><path d="M1.500 2L13.500 11 1.500 20z" fill="#c6cdd9" stroke="#c6cdd9" stroke-width="1.500" stroke-linejoin="round"/></svg><i class="sep" style="left:67px"></i><span class="t" style="left:80.5px;top:19.3px;font-size:27px;color:#f5f8fa;letter-spacing:-0.43px;">111.245.174.…</span><i class="sep" style="left:278px"></i><span class="t" style="left:291.5px;top:19.3px;font-size:27px;color:#f5f8fa;">17</span><i class="sep" style="left:489px"></i><span class="t" style="left:502.5px;top:19.3px;font-size:27px;color:#f5f8fa;">-</span><i class="sep" style="left:700px"></i><span class="t" style="left:713.5px;top:19.3px;font-size:27px;color:#f5f8fa;letter-spacing:-0.02px;">679411</span><i class="sep" style="left:911px"></i><span class="t" style="left:924.5px;top:19.3px;font-size:27px;color:#f5f8fa;letter-spacing:-0.02px;">679411</span><i class="sep" style="left:1122px"></i><span class="t" style="left:1135.5px;top:19.3px;font-size:27px;color:#f5f8fa;letter-spacing:-1.31px;">GET /images/l…</span><i class="sep" style="left:1333px"></i><span class="t" style="left:1346.5px;top:19.3px;font-size:27px;color:#f5f8fa;">405</span><i class="sep" style="left:1544px"></i><span class="t" style="left:1557.5px;top:19.3px;font-size:27px;color:#f5f8fa;">4196</span><i class="sep" style="left:1755px"></i><span class="t" style="left:1768.5px;top:19.3px;font-size:27px;color:#f5f8fa;">-</span><i class="sep" style="left:1966px"></i><span class="t" style="left:1979.5px;top:19.3px;font-size:27px;color:#f5f8fa;letter-spacing:-0.42px;">Mozilla/5.0 …</span><svg style="position:absolute;left:2138px;top:23.5px" width="32" height="8.8" viewBox="0 0 16 4.4" ><circle cx="2.2" cy="2.2" r="2.2" fill="#e8edf3"/><circle cx="8" cy="2.2" r="2.2" fill="#e8edf3"/><circle cx="13.8" cy="2.2" r="2.2" fill="#e8edf3"/></svg></div><div class="row" style="top:888px;background:#2a2f43"><svg style="position:absolute;left:28px;top:20px" width="15" height="22" viewBox="0 0 15 22" ><path d="M1.500 2L13.500 11 1.500 20z" fill="#c6cdd9" stroke="#c6cdd9" stroke-width="1.500" stroke-linejoin="round"/></svg><i class="sep" style="left:67px"></i><span class="t" style="left:80.5px;top:19.3px;font-size:27px;color:#f5f8fa;letter-spacing:-0.01px;">111.152.45.45</span><i class="sep" style="left:278px"></i><span class="t" style="left:291.5px;top:19.3px;font-size:27px;color:#f5f8fa;">28</span><i class="sep" style="left:489px"></i><span class="t" style="left:502.5px;top:19.3px;font-size:27px;color:#f5f8fa;">-</span><i class="sep" style="left:700px"></i><span class="t" style="left:713.5px;top:19.3px;font-size:27px;color:#f5f8fa;letter-spacing:-0.42px;">679421</span><i class="sep" style="left:911px"></i><span class="t" style="left:924.5px;top:19.3px;font-size:27px;color:#f5f8fa;letter-spacing:-0.42px;">679421</span><i class="sep" style="left:1122px"></i><span class="t" style="left:1135.5px;top:19.3px;font-size:27px;color:#f5f8fa;letter-spacing:-0.85px;">GET /index.ht…</span><i class="sep" style="left:1333px"></i><span class="t" style="left:1346.5px;top:19.3px;font-size:27px;color:#f5f8fa;">404</span><i class="sep" style="left:1544px"></i><span class="t" style="left:1557.5px;top:19.3px;font-size:27px;color:#f5f8fa;">278</span><i class="sep" style="left:1755px"></i><span class="t" style="left:1768.5px;top:19.3px;font-size:27px;color:#f5f8fa;">-</span><i class="sep" style="left:1966px"></i><span class="t" style="left:1979.5px;top:19.3px;font-size:27px;color:#f5f8fa;letter-spacing:-0.42px;">Mozilla/5.0 …</span><svg style="position:absolute;left:2138px;top:23.5px" width="32" height="8.8" viewBox="0 0 16 4.4" ><circle cx="2.2" cy="2.2" r="2.2" fill="#e8edf3"/><circle cx="8" cy="2.2" r="2.2" fill="#e8edf3"/><circle cx="13.8" cy="2.2" r="2.2" fill="#e8edf3"/></svg></div></div>
<div style="position:absolute;left:2321px;top:699px;width:31px;height:927px;background:#2b2b2d;"></div>
<div style="position:absolute;left:2330px;top:702px;width:16px;height:206px;background:#6f6f6f;border-radius:8px"></div>
</section>
<aside class="control">
<div class="callout" style="position:absolute;left:2381px;top:516px;width:581px;height:332px;background:#363c50;border-radius:6px"></div>
<div class="t" style="left:2406.0px;top:543.6px;font-size:27px;color:#f5f8fa;letter-spacing:0.29px;">Druid requires flat data (non-nested, non-</div>
<div class="t" style="left:2406.0px;top:582.9px;font-size:27px;color:#f5f8fa;letter-spacing:0.12px;">hierarchical). Each row should represent a</div>
<div class="t" style="left:2406.0px;top:622.3px;font-size:27px;color:#f5f8fa;letter-spacing:0.14px;">discrete event.</div>
<div class="t" style="left:2406.0px;top:680.3px;font-size:27px;color:#f5f8fa;letter-spacing:0.16px;">Ensure that your data appears correctly in a</div>
<div class="t" style="left:2406.0px;top:719.5px;font-size:27px;color:#f5f8fa;letter-spacing:0.74px;">row/column orientation.</div>
<a class="t" style="left:2406.0px;top:777.6px;font-size:27px;color:#48aff0;letter-spacing:0.49px;">Learn more</a>
<label class="t" style="left:2382.0px;top:884.3px;font-size:27px;color:#f5f8fa;letter-spacing:0.95px;">Input format</label>
<svg style="position:absolute;left:2934px;top:886px" width="28" height="28" viewBox="0 0 16 16" ><path d="M8 0C3.58 0 0 3.58 0 8s3.58 8 8 8 8-3.58 8-8-3.58-8-8-8zM7 3h2v2H7V3zm3 10H6v-1h1V7H6V6h3v6h1v1z" fill="#a7b0c5" fill-rule="evenodd"/></svg>
<div class="select" style="position:absolute;left:2382px;top:926px;width:580px;height:58px;background:#383d57;border-radius:6px;box-shadow:inset 0 0 0 2px rgba(16,22,26,.25)"></div>
<span class="t" style="left:2402.0px;top:941.3px;font-size:27px;color:#f5f8fa;letter-spacing:0.77px;">protobuf</span>
<svg style="position:absolute;left:2916px;top:939px" width="32" height="32" viewBox="0 0 16 16" ><path d="M12 6.5c0-.28-.22-.5-.5-.5h-7a.495.495 0 00-.37.83l3.5 4c.09.1.22.17.37.17s.28-.07.37-.17l3.5-4c.08-.09.13-.2.13-.33z" fill="#666c8a" fill-rule="evenodd"/></svg>
<div class="btn" style="position:absolute;left:2842px;top:1014px;width:120px;height:60px;background:#2a5a8c;border-radius:6px"></div>
<span class="t" style="left:2867.0px;top:1032.3px;font-size:27px;color:#7f9ac3;letter-spacing:0.49px;">Apply</span>
<div class="btn" style="position:absolute;left:2382px;top:1104px;width:320px;height:60px;background:#383d57;border-radius:6px;box-shadow:inset 0 0 0 2px rgba(16,22,26,.22)"></div>
<span class="t" style="left:2407.5px;top:1122.3px;font-size:27px;color:#f5f8fa;letter-spacing:0.54px;">Add column flattening</span>
<svg style="position:absolute;left:2716px;top:1118px" width="32" height="32" viewBox="0 0 16 16" ><path d="M8 0C3.58 0 0 3.58 0 8s3.58 8 8 8 8-3.58 8-8-3.58-8-8-8zM7 3h2v2H7V3zm3 10H6v-1h1V7H6V6h3v6h1v1z" fill="#a7b0c5" fill-rule="evenodd"/></svg>
<div class="btn primary" style="position:absolute;left:2660px;top:1570px;width:302px;height:60px;background:#2d84d8;border-radius:6px;box-shadow:inset 0 0 0 2px rgba(16,22,26,.25)"></div>
<span class="t" style="left:2687.0px;top:1588.3px;font-size:27px;color:#f5f8fa;letter-spacing:0.13px;">Next: Parse time</span>
<svg style="position:absolute;left:2905px;top:1584px" width="32" height="32" viewBox="0 0 16 16" ><path d="M14.7 7.29l-5-5a.965.965 0 00-.71-.3 1.003 1.003 0 00-.71 1.71l3.29 3.29H1.99c-.55 0-1 .45-1 1s.45 1 1 1h9.59l-3.29 3.29a1.003 1.003 0 001.42 1.42l5-5c.18-.18.29-.43.29-.71s-.12-.52-.3-.7z" fill="#fff" fill-rule="evenodd"/></svg>
</aside>
</main>
</div></div>
</body></html>
